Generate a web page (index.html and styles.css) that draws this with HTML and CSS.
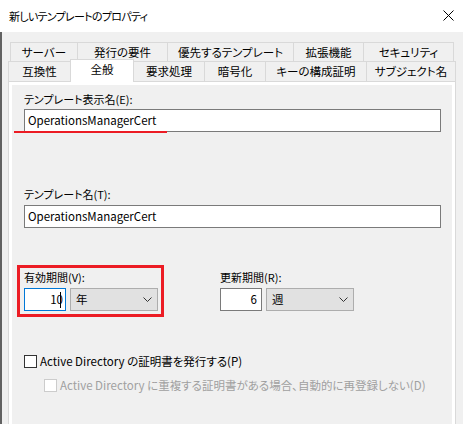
FILE: index.html
```html
<!DOCTYPE html>
<html lang="ja">
<head>
<meta charset="utf-8">
<link rel="stylesheet" href="styles.css">
</head>
<body>
<div class="window">
  <header class="titlebar">
    <span class="title">新しいテンプレートのプロパティ</span>
    <svg class="close" width="11" height="11" viewBox="0 0 11 11"><path d="M0.5 0.5 L10.5 10.5 M10.5 0.5 L0.5 10.5" stroke="#000" stroke-width="1" fill="none"/></svg>
  </header>
  <div class="body">
    <div class="edge"></div>
    <div class="content">
      <div class="tabs">
        <div class="tabrow row1">
          <div class="tab w67">サーバー</div>
          <div class="tab w90">発行の要件</div>
          <div class="tab w126">優先するテンプレート</div>
          <div class="tab w70">拡張機能</div>
          <div class="tab w91 last">セキュリティ</div>
        </div>
        <div class="tabrow row2">
          <div class="tab w62">互換性</div>
          <div class="tab active w64">全般</div>
          <div class="tab w71">要求処理</div>
          <div class="tab w61">暗号化</div>
          <div class="tab w101">キーの構成証明</div>
          <div class="tab w90 last">サブジェクト名</div>
        </div>
      </div>
      <div class="panel">
        <div class="page">
          <div class="field field1">
            <label class="label">テンプレート表示名(E):</label>
            <div class="mark-wrap">
              <div class="textbox">OperationsManagerCert</div>
              <div class="underline-mark"></div>
            </div>
          </div>
          <div class="field field2">
            <label class="label">テンプレート名(T):</label>
            <div class="textbox">OperationsManagerCert</div>
          </div>
          <div class="periods">
            <div class="period highlight">
              <label class="label">有効期間(V):</label>
              <div class="period-controls">
                <div class="numbox focus">10<span class="caret"></span></div>
                <div class="combo"><span>年</span><svg class="chev" width="9" height="5" viewBox="0 0 9 5"><path d="M0.5 0.5 L4.5 4.5 L8.5 0.5" stroke="#333" fill="none"/></svg></div>
              </div>
            </div>
            <div class="period plain">
              <label class="label">更新期間(R):</label>
              <div class="period-controls">
                <div class="numbox">6</div>
                <div class="combo"><span>週</span><svg class="chev" width="9" height="5" viewBox="0 0 9 5"><path d="M0.5 0.5 L4.5 4.5 L8.5 0.5" stroke="#333" fill="none"/></svg></div>
              </div>
            </div>
          </div>
          <div class="check check1">
            <span class="box"></span>
            <span>Active Directory の証明書を発行する(P)</span>
          </div>
          <div class="check check2 disabled">
            <span class="box"></span>
            <span>Active Directory に重複する証明書がある場合、自動的に再登録しない(D)</span>
          </div>
        </div>
      </div>
    </div>
  </div>
</div>
</body>
</html>
```

FILE: styles.css
```css
* { box-sizing: border-box; }
html, body {
  margin: 0;
  padding: 0;
}
body {
  width: 463px;
  height: 424px;
  overflow: hidden;
  background: #f0f0f0;
  font-family: "Noto Sans CJK JP", sans-serif;
  font-size: 11px;
  font-feature-settings: "palt";
  color: #000;
}
.window {
  display: flex;
  flex-direction: column;
  height: 424px;
}
.titlebar {
  height: 32px;
  flex: none;
  background: #fff;
  display: flex;
  align-items: center;
  justify-content: space-between;
  padding: 0 9px 0 9px;
  line-height: 16px;
}
.title { letter-spacing: -0.7px; }
.close { display: block; margin-top: -1px; }
.body {
  flex: 1;
  display: flex;
  min-height: 0;
}
.edge {
  width: 2px;
  background: #626262;
  flex: none;
}
.content {
  flex: 1;
  display: flex;
  flex-direction: column;
  padding-top: 10px;
}
.tabs {
  display: flex;
  flex-direction: column;
}
.tabrow {
  display: flex;
}
.row1 { margin-left: 8px; }
.row2 { margin-left: 6px; }
.tab {
  border-top: 1px solid #d9d9d9;
  border-left: 1px solid #d9d9d9;
  background: #f0f0f0;
  text-align: center;
  white-space: nowrap;
  font-size: 11.5px;
}
.tab.last { border-right: 1px solid #d9d9d9; }
.row1 .tab { height: 19px; line-height: 18px; }
.row2 .tab { height: 20px; line-height: 19px; }
.row2 .tab.active {
  background: #fff;
  height: 23px;
  margin-top: -2px;
  margin-bottom: -1px;
  margin-right: -1px;
  border-right: 1px solid #d9d9d9;
  position: relative;
  z-index: 2;
  line-height: 18px;
}
.w61 { width: 61px; } .w62 { width: 62px; } .w64 { width: 64px; }
.w67 { width: 67px; } .w70 { width: 70px; } .w71 { width: 71px; }
.w90 { width: 90px; } .w91 { width: 91px; } .w101 { width: 101px; }
.w126 { width: 126px; }

.panel {
  margin-left: 6px;
  width: 448px;
  flex: 1;
  border: 1px solid #d9d9d9;
  border-bottom: none;
  background: #fff;
  padding: 3px 3px 0 3px;
  display: flex;
  position: relative;
  z-index: 1;
}
.page {
  flex: 1;
  background: #f0f0f0;
  padding: 6px 0 0 12px;
}
.label {
  display: block;
  line-height: 16px;
  white-space: nowrap;
}
.field .label { margin-bottom: 2px; }
.field2 { margin-top: 54px; }
.field2 .label { margin-bottom: 3px; }
.textbox {
  width: 417px;
  height: 23px;
  border: 1px solid #7a7a7a;
  background: #fff;
  padding: 0 3px;
  line-height: 21px;
  font-size: 11.5px;
}
.mark-wrap { position: relative; }
.underline-mark {
  position: absolute;
  left: -10px;
  top: 22px;
  width: 153px;
  height: 2px;
  background: #ec1c24;
}
.periods {
  display: flex;
  margin-top: 37px;
  margin-left: -7px;
}
.period {
  border: 3px solid transparent;
  padding: 1px 3px 3px 4px;
}
.period.highlight { border-color: #ec1c24; }
.period.plain { margin-left: 49px; }
.period .label { margin-bottom: 3px; }
.period-controls {
  display: flex;
  gap: 4px;
}
.numbox {
  width: 42px;
  height: 23px;
  border: 1px solid #7a7a7a;
  background: #fff;
  text-align: right;
  padding-right: 4px;
  line-height: 21px;
  font-size: 11.5px;
}
.numbox.focus { border-color: #0078d7; }
.caret {
  display: inline-block;
  width: 1px;
  height: 16px;
  background: #000;
  vertical-align: -4px;
  margin-left: -3px;
}
.combo {
  width: 88px;
  height: 23px;
  border: 1px solid #adadad;
  background: #e1e1e1;
  display: flex;
  align-items: center;
  justify-content: space-between;
  padding: 0 5px 0 5px;
  line-height: 21px;
  font-size: 11.5px;
}
.chev { display: block; }
.check {
  display: flex;
  align-items: center;
  height: 16px;
  white-space: nowrap;
  font-size: 11.5px;
}
.check .box {
  width: 13px;
  height: 13px;
  border: 1px solid #333;
  background: #fff;
  margin-right: 3px;
  flex: none;
}
.check1 { margin-top: 36px; }
.check2 { margin-top: 8px; margin-left: 20px; }
.check.disabled { color: #a0a0a0; }
.check.disabled .box { border-color: #cccccc; }
```
